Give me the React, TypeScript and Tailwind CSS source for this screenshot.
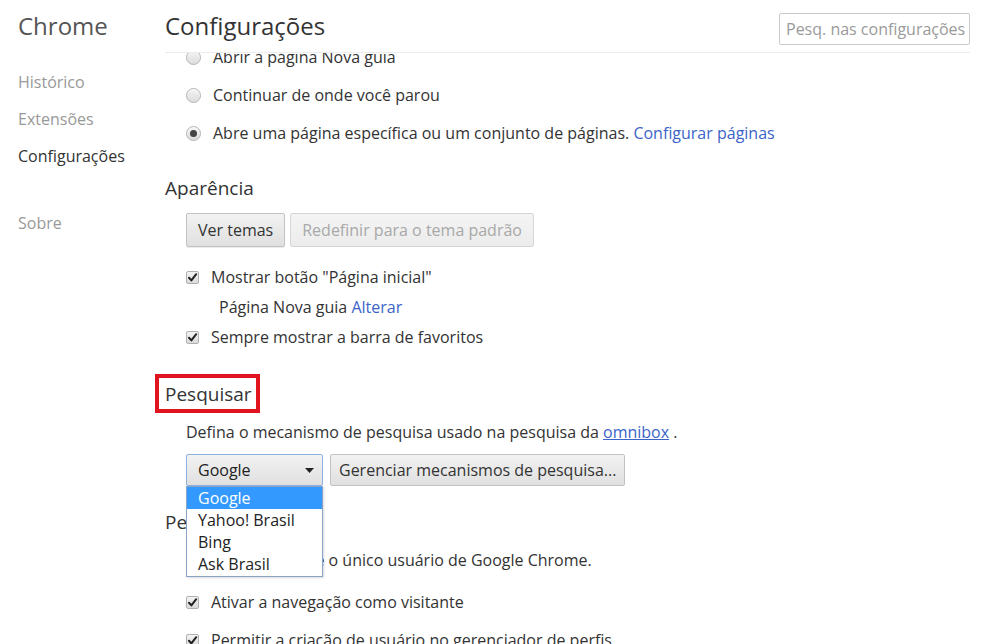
import React from "react";

const font = { fontFamily: '"Open Sans", "Noto Sans", Arial, sans-serif' };

function Radio({ checked }: { checked?: boolean }) {
  return (
    <span className="relative inline-flex h-[15px] w-[15px] shrink-0 items-center justify-center rounded-full border border-[#b4b4b4] bg-gradient-to-b from-[#f4f4f4] to-[#dcdcdc] shadow-[inset_0_1px_1px_rgba(255,255,255,0.8)]">
      {checked && <span className="h-[7px] w-[7px] rounded-full bg-[#444]" />}
    </span>
  );
}

function Checkbox() {
  return (
    <span className="inline-flex h-[13px] w-[13px] shrink-0 items-center justify-center rounded-[2px] border border-[#b0b0b0] bg-gradient-to-b from-[#f4f4f4] to-[#dadada]">
      <svg width="11" height="11" viewBox="0 0 11 11">
        <path d="M2 5.8 L4.4 8.4 L9.2 2.2" fill="none" stroke="#222" strokeWidth="2" strokeLinecap="round" strokeLinejoin="round" />
      </svg>
    </span>
  );
}

function Button({ children, disabled }: { children: React.ReactNode; disabled?: boolean }) {
  return (
    <div
      className={`flex h-[34px] items-center rounded-[2px] border px-[11px] ${
        disabled
          ? "border-[#d6d6d6] bg-gradient-to-b from-[#f4f4f4] to-[#ececec] text-[#a8a8a8]"
          : "border-[#c2c2c2] bg-gradient-to-b from-[#f2f2f2] to-[#e0e0e0] text-[#333] shadow-[0_1px_0_rgba(0,0,0,0.08)]"
      }`}
    >
      {children}
    </div>
  );
}

export default function App() {
  return (
    <div className="flex h-[644px] w-[984px] overflow-hidden bg-white text-[16px] text-[#333]" style={font}>
      {/* Sidebar */}
      <div className="flex w-[165px] shrink-0 flex-col pl-[18px]">
        <div className="mt-[11px] h-[30px] text-[24px] leading-[30px] text-[#555]">Chrome</div>
        <div className="mt-[23px] flex flex-col">
          <div className="h-[37px] leading-[37px] text-[#999]">Histórico</div>
          <div className="h-[37px] leading-[37px] text-[#999]">Extensões</div>
          <div className="h-[37px] leading-[37px] text-[#333]">Configurações</div>
          <div className="mt-[30px] h-[37px] leading-[37px] text-[#999]">Sobre</div>
        </div>
      </div>

      {/* Main */}
      <div className="flex w-[805px] shrink-0 flex-col">
        <div className="relative z-20 flex h-[53px] shrink-0 items-start justify-between border-b border-[#ececec] bg-white">
          <div className="mt-[10px] text-[24px] leading-[32px] text-[#333]">Configurações</div>
          <div className="mt-[13px] flex h-[32px] w-[191px] items-center overflow-hidden whitespace-nowrap rounded-[2px] border border-[#cacaca] pl-[6px] text-[#9a9a9a]">
            Pesq. nas configurações
          </div>
        </div>

        <div className="relative flex-1 overflow-y-clip">
          <div className="mt-[-15px] flex flex-col">
            {/* Startup radios */}
            <div className="flex h-[38px] items-center gap-[12px] pl-[21px]">
              <Radio />
              <span>Abrir a página Nova guia</span>
            </div>
            <div className="flex h-[38px] items-center gap-[12px] pl-[21px]">
              <Radio />
              <span>Continuar de onde você parou</span>
            </div>
            <div className="flex h-[38px] items-center gap-[12px] pl-[21px]">
              <Radio checked />
              <span>
                Abre uma página específica ou um conjunto de páginas.{" "}
                <span className="text-[#3c64c8]">Configurar páginas</span>
              </span>
            </div>

            {/* Aparência */}
            <div className="mt-[24px] h-[24px] text-[19px] leading-[24px]">Aparência</div>
            <div className="mt-[13px] flex gap-[5px] pl-[21px]">
              <Button>Ver temas</Button>
              <Button disabled>Redefinir para o tema padrão</Button>
            </div>
            <div className="mt-[15px] flex h-[30px] items-center gap-[12px] pl-[21px]">
              <Checkbox />
              <span>Mostrar botão "Página inicial"</span>
            </div>
            <div className="flex h-[30px] items-center pl-[54px]">
              <span>
                Página Nova guia <span className="text-[#3c64c8]">Alterar</span>
              </span>
            </div>
            <div className="flex h-[30px] items-center gap-[12px] pl-[21px]">
              <Checkbox />
              <span>Sempre mostrar a barra de favoritos</span>
            </div>

            {/* Pesquisar */}
            <div className="relative mt-[30px] h-[24px] self-start text-[19px] leading-[24px]">
              Pesquisar
              <div className="absolute left-[-10px] top-[-8px] h-[39px] w-[105px] border-[4px] border-[#e0141e]" />
            </div>
            <div className="mt-[14px] h-[24px] pl-[21px] leading-[24px]">
              Defina o mecanismo de pesquisa usado na pesquisa da{" "}
              <span className="text-[#3c64c8] underline">omnibox</span> .
            </div>
            <div className="relative mt-[10px] flex gap-[7px] pl-[21px]">
              <div className="relative flex h-[32px] w-[137px] items-center justify-between rounded-[2px] border border-[#8fb1e0] bg-gradient-to-b from-[#f2f2f2] to-[#e0e0e0] pl-[11px] pr-[8px]">
                <span className="text-[#222]">Google</span>
                <svg width="9" height="5" viewBox="0 0 9 5">
                  <path d="M0 0 L9 0 L4.5 5 Z" fill="#222" />
                </svg>
                {/* Dropdown list */}
                <div className="absolute left-[-1px] top-[31px] z-10 flex w-[137px] flex-col border border-[#8aa3c6] bg-white pb-[1px] shadow-[1px_1px_2px_rgba(0,0,0,0.15)]">
                  <div className="h-[22px] bg-[#3399ff] pl-[11px] leading-[22px] text-white">Google</div>
                  <div className="h-[22px] pl-[11px] leading-[22px] text-[#222]">Yahoo! Brasil</div>
                  <div className="h-[22px] pl-[11px] leading-[22px] text-[#222]">Bing</div>
                  <div className="h-[22px] pl-[11px] leading-[22px] text-[#222]">Ask Brasil</div>
                </div>
              </div>
              <div className="flex h-[32px] items-center rounded-[2px] border border-[#c2c2c2] bg-gradient-to-b from-[#f2f2f2] to-[#e0e0e0] px-[8px] text-[#333]">
                Gerenciar mecanismos de pesquisa...
              </div>
            </div>

            {/* Pessoas */}
            <div className="mt-[24px] h-[24px] text-[19px] leading-[24px]">Pessoas</div>
            <div className="mt-[14px] h-[24px] whitespace-nowrap pl-[21px] leading-[24px]">
              Atualmente você é o único usuário de Google Chrome.
            </div>
            <div className="mt-[15px] flex h-[30px] items-center gap-[12px] pl-[21px]">
              <Checkbox />
              <span>Ativar a navegação como visitante</span>
            </div>
            <div className="mt-[8px] flex h-[30px] items-center gap-[12px] pl-[21px]">
              <Checkbox />
              <span>Permitir a criação de usuário no gerenciador de perfis</span>
            </div>
          </div>
        </div>
      </div>
    </div>
  );
}
